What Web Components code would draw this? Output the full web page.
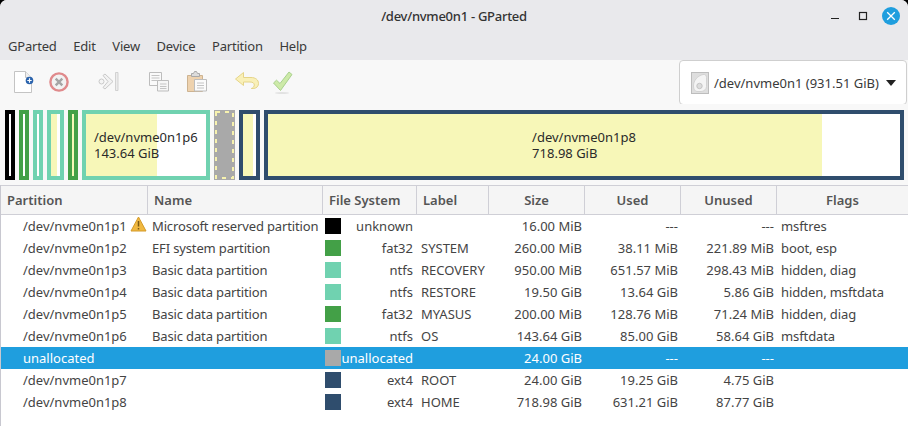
<!DOCTYPE html>
<html>
<head>
<meta charset="utf-8">
<title>/dev/nvme0n1 - GParted</title>
<style>
  html, body { margin: 0; padding: 0; background: #000; }
  body { width: 908px; height: 426px; overflow: hidden; font-family: 'Noto Sans', sans-serif; font-size: 13px; color: #3d3d3d; }
</style>
</head>
<body>
<gp-window>
  <gp-titlebar>/dev/nvme0n1 - GParted</gp-titlebar>
  <gp-menubar>
    <gp-menu>GParted</gp-menu><gp-menu>Edit</gp-menu><gp-menu>View</gp-menu><gp-menu>Device</gp-menu><gp-menu>Partition</gp-menu><gp-menu>Help</gp-menu>
  </gp-menubar>
  <gp-toolbar>
    <gp-tool icon="new"></gp-tool>
    <gp-tool icon="delete"></gp-tool>
    <gp-tool icon="resize" style="margin-left:13px"></gp-tool>
    <gp-tool icon="copy" style="margin-left:15px"></gp-tool>
    <gp-tool icon="paste" style="margin-left:2px"></gp-tool>
    <gp-tool icon="undo" style="margin-left:13px"></gp-tool>
    <gp-tool icon="apply" style="margin-left:1px"></gp-tool>
    <gp-combo>/dev/nvme0n1 (931.51 GiB)</gp-combo>
  </gp-toolbar>
  <gp-diskmap>
    <gp-part color="#000000" width="10" used="0"></gp-part>
    <gp-part color="#43a047" width="10" used="0"></gp-part>
    <gp-part color="#70d2b0" width="10" used="0"></gp-part>
    <gp-part color="#70d2b0" width="17" used="6"></gp-part>
    <gp-part color="#43a047" width="10" used="2"></gp-part>
    <gp-part color="#70d2b0" width="128" used="71" style="--pad:8px">/dev/nvme0n1p6<br>143.64 GiB</gp-part>
    <gp-free width="21"></gp-free>
    <gp-part color="#2f4d6d" width="21" used="10"></gp-part>
    <gp-part color="#2f4d6d" width="640" used="554" style="--justify:center">/dev/nvme0n1p8<br>718.98 GiB</gp-part>
  </gp-diskmap>
  <gp-table>
    <gp-head></gp-head>
    <gp-row path="/dev/nvme0n1p1" warn name="Microsoft reserved partition" color="#000000" fs="unknown" size="16.00 MiB" used="---" unused="---" flags="msftres"></gp-row>
    <gp-row path="/dev/nvme0n1p2" name="EFI system partition" color="#43a047" fs="fat32" label="SYSTEM" size="260.00 MiB" used="38.11 MiB" unused="221.89 MiB" flags="boot, esp"></gp-row>
    <gp-row path="/dev/nvme0n1p3" name="Basic data partition" color="#70d2b0" fs="ntfs" label="RECOVERY" size="950.00 MiB" used="651.57 MiB" unused="298.43 MiB" flags="hidden, diag"></gp-row>
    <gp-row path="/dev/nvme0n1p4" name="Basic data partition" color="#70d2b0" fs="ntfs" label="RESTORE" size="19.50 GiB" used="13.64 GiB" unused="5.86 GiB" flags="hidden, msftdata"></gp-row>
    <gp-row path="/dev/nvme0n1p5" name="Basic data partition" color="#43a047" fs="fat32" label="MYASUS" size="200.00 MiB" used="128.76 MiB" unused="71.24 MiB" flags="hidden, diag"></gp-row>
    <gp-row path="/dev/nvme0n1p6" name="Basic data partition" color="#70d2b0" fs="ntfs" label="OS" size="143.64 GiB" used="85.00 GiB" unused="58.64 GiB" flags="msftdata"></gp-row>
    <gp-row selected path="unallocated" color="#a9a9a9" fs="unallocated" size="24.00 GiB" used="---" unused="---"></gp-row>
    <gp-row path="/dev/nvme0n1p7" color="#2f4d6d" fs="ext4" label="ROOT" size="24.00 GiB" used="19.25 GiB" unused="4.75 GiB"></gp-row>
    <gp-row path="/dev/nvme0n1p8" color="#2f4d6d" fs="ext4" label="HOME" size="718.98 GiB" used="631.21 GiB" unused="87.77 GiB"></gp-row>
  </gp-table>
</gp-window>

<script>
const COLS = '147px 175px 94px 72px 96px 96px 96px 131px';

const ICONS = {
  new: `<path d="M15 72.500h11l6 6v14.500h-17z" fill="#d8d8d8" opacity=".6"/><path d="M14.500 71.500h11l6 6v15h-17z" fill="#fff" stroke="#c4c4c4"/><path d="M25.500 71.500v6h6" fill="#eee" stroke="#c4c4c4"/>
        <circle cx="29.500" cy="80.500" r="3.800" fill="#2a63ad"/><path d="M27.300 80.500h4.400M29.500 78.300v4.400" stroke="#fff" stroke-width="1.200"/>`,
  delete: `<circle cx="59" cy="82.500" r="9" fill="#e7e7e7" opacity=".6"/><circle cx="59" cy="82" r="8.600" fill="#f2f2f2" stroke="#e08a8c" stroke-width="2.400"/><path d="M55.700 78.700l6.600 6.600M62.300 78.700l-6.600 6.600" stroke="#a5a5a5" stroke-width="2.400"/>`,
  resize: `<path d="M105 74l8 7.500-8 7.500-2-1.500 5-6-5-6z" fill="#f2f2f2" stroke="#c9c9c9"/><circle cx="101.500" cy="81.500" r="2.500" fill="#f4f4f4" stroke="#c9c9c9"/><path d="M115.500 72.500h2.500v18h-2.500z" fill="#ececec" stroke="#c9c9c9" stroke-width=".8"/>`,
  copy: `<path d="M149.500 72.500h12v13h-12z" fill="#fafafa" stroke="#bdbdbd"/><path d="M151.500 75.500h8M151.500 78h8M151.500 80.500h8" stroke="#c4c4c4"/>
         <path d="M157.500 80.500h11v10.500h-11z" fill="#f6f6f6" stroke="#bdbdbd"/><path d="M160 84h6.500M160 86.500h6.500M160 88.500h6.500" stroke="#c4c4c4"/>`,
  paste: `<path d="M187.500 75.500h15v16h-15z" fill="#eed2ae" stroke="#cdb391"/><path d="M191.500 73.500h2l1-2h2l1 2h2v3h-8z" fill="#dcdcdc" stroke="#a9a9a9"/>
          <path d="M194.500 79.500h12v11.500h-12z" fill="#fbfbfb" stroke="#bdbdbd"/><path d="M197 83h7M197 85.500h7M197 88h7" stroke="#c4c4c4"/>`,
  undo: `<path d="M243.500 72.500l-8 6.500 8 6.500v-3.500h6.500c2.800 0 4.300 1.200 4.300 3 0 1.500-1 2.800-3 3.500h2.500c3.200-.5 4.700-2.500 4.700-5 0-3.700-3-6-7.500-6h-7.500z" fill="#f9f0b8" stroke="#e5d488"/>`,
  apply: `<path d="M273.500 83l3-2.800 3.500 3.300 9-11.500 3 2.500-11.500 16z" fill="#cdeaa8" stroke="#a9d18e"/><ellipse cx="282" cy="93" rx="7" ry="1" fill="#e2e2e2"/>`,
};

class GpWindow extends HTMLElement {
  constructor() {
    super();
    this.attachShadow({ mode: 'open' }).innerHTML = `
      <style>
        :host { display: flex; flex-direction: column; width: 908px; height: 426px; background: #fff; border-radius: 7px 7px 0 0; overflow: hidden; position: relative; }
        .edge { position: absolute; left: 0; top: 185px; bottom: 0; width: 1px; background: #c8c8d0; }
      </style>
      <slot></slot><div class="edge"></div>`;
  }
}

class GpTitlebar extends HTMLElement {
  constructor() {
    super();
    this.attachShadow({ mode: 'open' }).innerHTML = `
      <style>
        :host { display: grid; grid-template-columns: 1fr auto 1fr; align-items: center; height: 30px; background: #e9e9ec; font-size: 13px; font-weight: 500; letter-spacing: -0.27px; color: #333; }
        .btns { grid-column: 3; display: flex; justify-content: flex-end; align-items: center; padding-right: 2px; }
        .t { grid-column: 2; padding-top: 2px; }
        svg { display: block; }
      </style>
      <div class="t"><slot></slot></div>
      <div class="btns">
        <svg width="84" height="30" viewBox="0 0 84 30">
          <path d="M9 18.500h8" stroke="#222" stroke-width="1.200"/>
          <rect x="37.500" y="12.500" width="7" height="7" fill="none" stroke="#222" stroke-width="1.200"/>
          <circle cx="69" cy="16" r="9" fill="#1f9ede"/>
          <path d="M65.200 12.200l7.600 7.600M72.800 12.200l-7.600 7.600" stroke="#fff" stroke-width="1.300"/>
        </svg>
      </div>`;
  }
}

class GpMenubar extends HTMLElement {
  constructor() {
    super();
    this.attachShadow({ mode: 'open' }).innerHTML = `
      <style>
        :host { display: flex; align-items: center; gap: 16.6px; box-sizing: border-box; height: 30px; padding: 2px 0 0 8px; background: #e9e9ec; }
      </style>
      <slot></slot>`;
  }
}

class GpMenu extends HTMLElement {
  constructor() {
    super();
    this.attachShadow({ mode: 'open' }).innerHTML = `
      <style>:host { display: block; font-size: 13px; letter-spacing: -0.2px; color: #3a3a3a; }</style><slot></slot>`;
  }
}

class GpToolbar extends HTMLElement {
  constructor() {
    super();
    this.attachShadow({ mode: 'open' }).innerHTML = `
      <style>
        :host { display: flex; align-items: stretch; height: 44px; padding-left: 5px; background: #f8f8f8; flex: none; }
      </style>
      <slot></slot>`;
  }
}

class GpTool extends HTMLElement {
  connectedCallback() {
    const name = this.getAttribute('icon');
    const left = { new: 5, delete: 41, resize: 90, copy: 141, paste: 179, undo: 228, apply: 265 }[name];
    this.attachShadow({ mode: 'open' }).innerHTML = `
      <style>:host { display: block; width: 36px; height: 44px; flex: none; } svg { display: block; }</style>
      <svg width="36" height="44" viewBox="${left} 60 36 44">${ICONS[name]}</svg>`;
  }
}

class GpCombo extends HTMLElement {
  constructor() {
    super();
    this.attachShadow({ mode: 'open' }).innerHTML = `
      <style>
        :host { display: flex; align-items: center; box-sizing: border-box; width: 228px; height: 45px; margin-left: auto; margin-right: 1px; padding: 0 10px 0 11px; background: #fff; border: 1px solid #cfcfcf; border-radius: 4px; font-size: 13px; color: #3a3a3a; }
        svg { flex: none; display: block; }
        .label { flex: 1; padding-left: 5px; white-space: nowrap; }
        .arrow { width: 0; height: 0; border: 5.5px solid transparent; border-top: 6.5px solid #222; border-bottom: 0; }
      </style>
      <svg width="18" height="22" viewBox="0 0 18 22">
        <rect x=".5" y=".5" width="17" height="21" fill="#dedede" stroke="#bdbdbd"/>
        <path d="M2.500 14c0-5 3.500-10 9.500-11.500 2-.4 3.500.7 3.500 3v9c0 2.500-2.500 5-5.500 5H6c-2 0-3.500-2.500-3.500-5.500z" fill="#f4f4f4" stroke="#c8c8c8" stroke-width=".7"/>
        <circle cx="8.500" cy="14" r="2.700" fill="#ddd" stroke="#c4c4c4"/>
      </svg>
      <span class="label"><slot></slot></span>
      <span class="arrow"></span>`;
  }
}

class GpDiskmap extends HTMLElement {
  constructor() {
    super();
    this.attachShadow({ mode: 'open' }).innerHTML = `
      <style>
        :host { display: flex; gap: 4px; box-sizing: border-box; height: 81px; padding: 6px 0 5px 5px; background: #f8f8f8; flex: none; }
      </style>
      <slot></slot>`;
  }
}

class GpPart extends HTMLElement {
  connectedCallback() {
    const color = this.getAttribute('color');
    const used = this.getAttribute('used');
    this.attachShadow({ mode: 'open' }).innerHTML = `
      <style>
        :host { display: flex; align-items: center; justify-content: var(--justify, flex-start); box-sizing: border-box; width: ${this.getAttribute('width')}px; height: 70px; flex: none; padding-left: var(--pad, 0); border: 4px solid ${color}; background: linear-gradient(to right, #f7f7b8 ${used}px, #fff ${used}px); font-size: 13px; line-height: 16px; color: #2a2a2a; }
      </style>
      <div><slot></slot></div>`;
  }
}

class GpFree extends HTMLElement {
  connectedCallback() {
    const w = +this.getAttribute('width');
    this.attachShadow({ mode: 'open' }).innerHTML = `
      <style>:host { display: block; width: ${w}px; height: 70px; flex: none; background: #a9a9a9; } svg { display: block; }</style>
      <svg width="${w}" height="70"><rect x="2" y="2" width="${w - 4}" height="66" fill="none" stroke="#f7f2ae" stroke-width="2" stroke-dasharray="4 5"/></svg>`;
  }
}

class GpTable extends HTMLElement {
  constructor() {
    super();
    this.attachShadow({ mode: 'open' }).innerHTML = `
      <style>:host { display: block; flex: 1; background: #fff; padding-left: 1px; --cols: ${COLS}; }</style>
      <slot></slot>`;
  }
}

class GpHead extends HTMLElement {
  constructor() {
    super();
    const cells = [['Partition', 'left'], ['Name', 'left'], ['File System', 'left'], ['Label', 'left'], ['Size', 'center'], ['Used', 'center'], ['Unused', 'center'], ['Flags', 'center']];
    this.attachShadow({ mode: 'open' }).innerHTML = `
      <style>
        :host { display: grid; grid-template-columns: var(--cols); height: 30px; box-sizing: border-box; background: #f5f5f5; border-top: 1px solid #cfcfd6; border-bottom: 1px solid #cfcfd6; font-size: 13px; font-weight: 600; color: #555; }
        div { display: flex; align-items: center; box-sizing: border-box; padding: 0 6px; border-right: 1px solid #cfcfd6; white-space: nowrap; }
        div:last-child { border-right: 0; }
        .center { justify-content: center; }
      </style>
      ${cells.map(([t, a]) => `<div class="${a}">${t}</div>`).join('')}`;
  }
}

class GpRow extends HTMLElement {
  connectedCallback() {
    const a = (n) => this.getAttribute(n) || '';
    const warn = this.hasAttribute('warn') ? `
      <svg class="warn" width="17" height="16" viewBox="0 0 17 16">
        <path d="M8.500 1L16 15H1z" fill="#f0b840" stroke="#d49a28" stroke-linejoin="round"/>
        <path d="M8.500 5v5.500M8.500 12v1.500" stroke="#7a5a14" stroke-width="1.500"/>
      </svg>` : '';
    this.attachShadow({ mode: 'open' }).innerHTML = `
      <style>
        :host { display: grid; grid-template-columns: var(--cols); height: 22px; align-items: center; font-size: 13px; white-space: nowrap; color: #444; }
        :host([selected]) { background: #1f9ede; color: #fff; }
        .path { position: relative; padding-left: 22px; }
        .warn { position: absolute; left: 129px; top: -1px; }
        .name { padding-left: 4px; letter-spacing: -0.14px; }
        .fs { display: flex; align-items: center; justify-content: space-between; padding: 0 4px 0 2px; }
        .sw { width: 16px; height: 16px; flex: none; background: ${a('color')}; }
        .label { padding-left: 4px; }
        .r { text-align: right; padding-right: 3px; }
        .flags { padding-left: 4px; letter-spacing: -0.1px; }
      </style>
      <div class="path">${a('path')}${warn}</div>
      <div class="name">${a('name')}</div>
      <div class="fs"><span class="sw"></span><span>${a('fs')}</span></div>
      <div class="label">${a('label')}</div>
      <div class="r">${a('size')}</div>
      <div class="r">${a('used')}</div>
      <div class="r">${a('unused')}</div>
      <div class="flags">${a('flags')}</div>`;
  }
}

customElements.define('gp-window', GpWindow);
customElements.define('gp-titlebar', GpTitlebar);
customElements.define('gp-menubar', GpMenubar);
customElements.define('gp-menu', GpMenu);
customElements.define('gp-toolbar', GpToolbar);
customElements.define('gp-tool', GpTool);
customElements.define('gp-combo', GpCombo);
customElements.define('gp-diskmap', GpDiskmap);
customElements.define('gp-part', GpPart);
customElements.define('gp-free', GpFree);
customElements.define('gp-table', GpTable);
customElements.define('gp-head', GpHead);
customElements.define('gp-row', GpRow);
</script>
</body>
</html>
